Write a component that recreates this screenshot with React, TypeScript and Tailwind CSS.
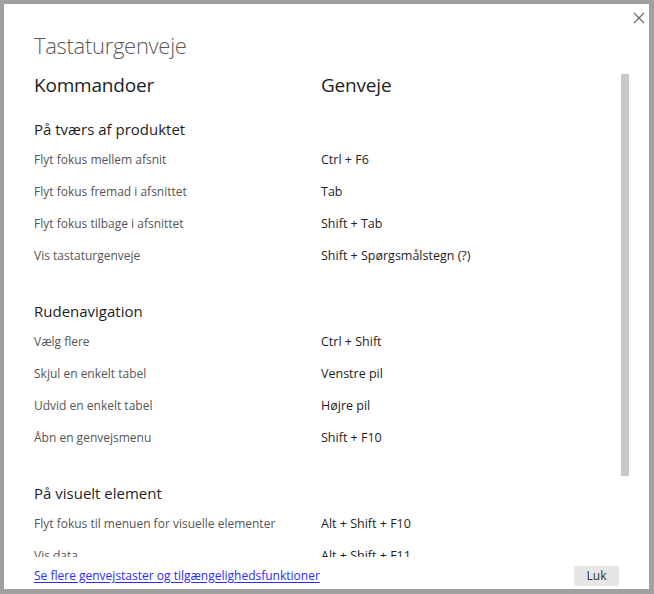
import React from 'react';

type Row = { cmd: string; keys: string };
type Section = { title: string; rows: Row[] };

const sections: Section[] = [
  {
    title: 'På tværs af produktet',
    rows: [
      { cmd: 'Flyt fokus mellem afsnit', keys: 'Ctrl + F6' },
      { cmd: 'Flyt fokus fremad i afsnittet', keys: 'Tab' },
      { cmd: 'Flyt fokus tilbage i afsnittet', keys: 'Shift + Tab' },
      { cmd: 'Vis tastaturgenveje', keys: 'Shift + Spørgsmålstegn (?)' },
    ],
  },
  {
    title: 'Rudenavigation',
    rows: [
      { cmd: 'Vælg flere', keys: 'Ctrl + Shift' },
      { cmd: 'Skjul en enkelt tabel', keys: 'Venstre pil' },
      { cmd: 'Udvid en enkelt tabel', keys: 'Højre pil' },
      { cmd: 'Åbn en genvejsmenu', keys: 'Shift + F10' },
    ],
  },
  {
    title: 'På visuelt element',
    rows: [
      { cmd: 'Flyt fokus til menuen for visuelle elementer', keys: 'Alt + Shift + F10' },
      { cmd: 'Vis data', keys: 'Alt + Shift + F11' },
      { cmd: 'Skift til visningstilstand', keys: 'Ctrl + Alt + F' },
    ],
  },
];

export default function App() {
  return (
    <div
      className="w-[654px] h-[594px] bg-[#a0a0a0] pt-[4px] pl-[4px] pr-[5px] pb-[5px]"
      style={{ fontFamily: '"Open Sans", "Noto Sans", sans-serif' }}
    >
      <div className="relative h-full bg-white flex flex-col">
        {/* close */}
        <button className="absolute right-[4px] top-[8px] w-[12px] h-[12px] text-[#666]">
          <svg viewBox="0 0 12 12" className="w-[12px] h-[12px]" fill="none" stroke="currentColor" strokeWidth="1.1">
            <path d="M1 1 L11 11 M11 1 L1 11" />
          </svg>
        </button>

        <h1 className="pl-[30px] pt-[25px] h-[58px] text-[22px] leading-[32px] font-light tracking-[-0.3px] text-[#5a5a5a]">
          Tastaturgenveje
        </h1>

        <div className="relative flex-1 overflow-hidden">
          {/* scrollbar */}
          <div className="absolute left-[617px] top-[12px] w-[8px] h-[402px] bg-[#c8c8c8]" />

          <div className="pl-[30px] pt-[9px]">
            <div className="flex h-[28px] items-center text-[19px] tracking-[-0.2px] text-[#1e1e1e]">
              <div className="w-[287px]">Kommandoer</div>
              <div>Genveje</div>
            </div>

            <div className="pt-[16px]">
              {sections.map((s, i) => (
                <div key={s.title} className={i > 0 ? 'mt-[25px]' : ''}>
                  <div className="h-[29px] flex items-center text-[15px] text-[#1e1e1e]">{s.title}</div>
                  {s.rows.map(r => (
                    <div key={r.cmd} className="h-[32px] flex items-center">
                      <div className="w-[287px] text-[12px] text-[#555]">{r.cmd}</div>
                      <div className="text-[12.5px] text-[#1e1e1e]">{r.keys}</div>
                    </div>
                  ))}
                </div>
              ))}
            </div>
          </div>
        </div>

        <div className="h-[32px] shrink-0 flex items-center justify-between pl-[30px] pr-[30px] pt-[5px]">
          <a href="#" className="text-[12px] leading-[16px] text-[#2b2bff] underline underline-offset-[2px]">
            Se flere genvejstaster og tilgængelighedsfunktioner
          </a>
          <button className="w-[45px] h-[20px] bg-[#e6e6e6] text-[12px] text-[#333]">Luk</button>
        </div>
      </div>
    </div>
  );
}
